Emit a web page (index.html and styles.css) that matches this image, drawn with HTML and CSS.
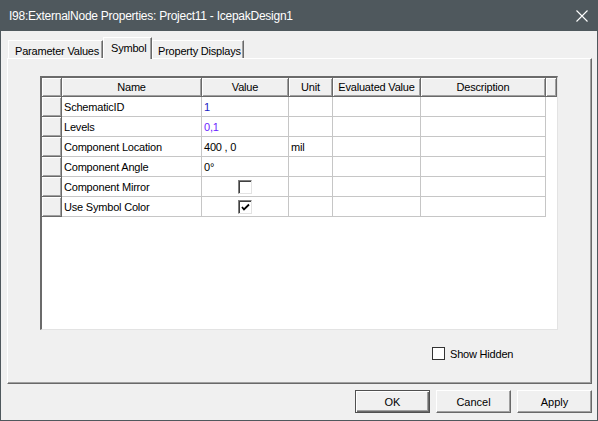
FILE: index.html
```html
<!DOCTYPE html>
<html>
<head>
<meta charset="utf-8">
<link rel="stylesheet" href="styles.css">
</head>
<body>
<div class="window">
  <div class="titlebar">
    <span class="title">I98:ExternalNode Properties: Project11 - IcepakDesign1</span>
    <svg class="close" width="12" height="12" viewBox="0 0 12 12"><path d="M0.5 0.5 L11.5 11.5 M11.5 0.5 L0.5 11.5" stroke="#fff" stroke-width="1.1"/></svg>
  </div>
  <div class="content">
    <div class="tabs">
      <div class="tab t1">Parameter Values</div>
      <div class="tab t2 active">Symbol</div>
      <div class="tab t3">Property Displays</div>
    </div>
    <div class="panel">
      <div class="grid">
        <div class="row hdr">
          <div class="hc"></div>
          <div class="hc">Name</div>
          <div class="hc">Value</div>
          <div class="hc">Unit</div>
          <div class="hc">Evaluated Value</div>
          <div class="hc">Description</div>
          <div class="hc"></div>
        </div>
        <div class="row">
          <div class="rh"></div>
          <div class="c">SchematicID</div>
          <div class="c blue">1</div>
          <div class="c"></div>
          <div class="c"></div>
          <div class="c"></div>
          <div class="e"></div>
        </div>
        <div class="row">
          <div class="rh"></div>
          <div class="c">Levels</div>
          <div class="c violet">0,1</div>
          <div class="c"></div>
          <div class="c"></div>
          <div class="c"></div>
          <div class="e"></div>
        </div>
        <div class="row">
          <div class="rh"></div>
          <div class="c">Component Location</div>
          <div class="c">400 , 0</div>
          <div class="c">mil</div>
          <div class="c"></div>
          <div class="c"></div>
          <div class="e"></div>
        </div>
        <div class="row">
          <div class="rh"></div>
          <div class="c">Component Angle</div>
          <div class="c">0°</div>
          <div class="c"></div>
          <div class="c"></div>
          <div class="c"></div>
          <div class="e"></div>
        </div>
        <div class="row">
          <div class="rh"></div>
          <div class="c">Component Mirror</div>
          <div class="c center"><span class="cb3d"></span></div>
          <div class="c"></div>
          <div class="c"></div>
          <div class="c"></div>
          <div class="e"></div>
        </div>
        <div class="row">
          <div class="rh"></div>
          <div class="c">Use Symbol Color</div>
          <div class="c center"><span class="cb3d"><svg width="11" height="11" viewBox="0 0 11 11"><path d="M2 5 L4 7.5 L9 2.5" fill="none" stroke="#000" stroke-width="1.8"/></svg></span></div>
          <div class="c"></div>
          <div class="c"></div>
          <div class="c"></div>
          <div class="e"></div>
        </div>
      </div>
      <div class="showhidden">
        <span class="cbflat"></span>
        <span class="lbl">Show Hidden</span>
      </div>
    </div>
    <div class="footer">
      <button class="btn default">OK</button>
      <button class="btn">Cancel</button>
      <button class="btn">Apply</button>
    </div>
  </div>
</div>
</body>
</html>
```
FILE: styles.css
```css
html, body {
  margin: 0;
  padding: 0;
  background: #f0f0f0;
}
body {
  font-family: "Liberation Sans", Arial, sans-serif;
  font-size: 11px;
  letter-spacing: -0.2px;
  color: #000;
}
.window {
  width: 598px;
  height: 421px;
  box-sizing: border-box;
  border: 1px solid #4f585d;
  border-top: 0;
  background: #f0f0f0;
  display: flex;
  flex-direction: column;
}
.titlebar {
  height: 31px;
  background: #4f585d;
  display: flex;
  align-items: center;
  justify-content: space-between;
  padding: 0 9px 0 9px;
  flex: none;
  margin: 0 -1px;
}
.title {
  color: #fff;
  font-size: 12px;
  letter-spacing: -0.25px;
}
.close {
  margin-right: 1px;
}
.content {
  padding: 6px 5px 0 6px;
  display: flex;
  flex-direction: column;
  flex: 1;
}
.tabs {
  height: 21px;
  display: flex;
  align-items: flex-end;
  padding-left: 1px;
  position: relative;
  z-index: 2;
}
.tab {
  flex: none;
  white-space: nowrap;
  height: 18px;
  box-sizing: border-box;
  background: #f0f0f0;
  border-top: 1px solid #fff;
  border-left: 1px solid #fff;
  border-right: 1px solid #696969;
  box-shadow: inset -1px 0 #a0a0a0;
  display: flex;
  align-items: center;
  padding-left: 6px;
  padding-top: 2px;
}
.t1 { width: 95px; }
.t2 { width: 49px; }
.t3 { width: 92px; padding-left: 5px; }
.tab.active {
  height: 22px;
  margin-bottom: -1px;
  padding-left: 7px;
  padding-top: 0;
  padding-bottom: 2px;
}
.panel {
  width: 585px;
  height: 326px;
  box-sizing: border-box;
  border-top: 1px solid #fff;
  border-left: 1px solid #fff;
  border-right: 1px solid #696969;
  border-bottom: 1px solid #696969;
  box-shadow: inset -1px -1px #a0a0a0;
  padding: 17px 0 0 32px;
  display: flex;
  flex-direction: column;
}
.grid {
  width: 518px;
  height: 254px;
  box-sizing: border-box;
  background: #fff;
  border-top: 2px solid #6b6b6b;
  border-left: 2px solid #6b6b6b;
  border-right: 1px solid #e3e3e3;
  border-bottom: 1px solid #e3e3e3;
}
.row {
  display: grid;
  grid-template-columns: 20px 140px 87px 44px 88px 125px 11px;
  height: 20px;
}
.row.hdr {
  height: 19px;
}
.hc, .rh {
  background: #f0f0f0;
  box-sizing: border-box;
  border-right: 1px solid #696969;
  border-bottom: 1px solid #696969;
  box-shadow: inset 1px 1px #fff, inset -1px -1px #a0a0a0;
  display: flex;
  align-items: center;
  justify-content: center;
  white-space: nowrap;
}
.c {
  box-sizing: border-box;
  border-right: 1px solid #c6c6c6;
  border-bottom: 1px solid #c6c6c6;
  display: flex;
  align-items: center;
  padding-left: 2px;
  white-space: nowrap;
}
.c.center {
  justify-content: center;
  padding-left: 0;
  padding-right: 1px;
}
.e {
  background: #fff;
}
.blue { color: #1c1cc4; }
.violet { color: #6b1cff; }
.cb3d {
  width: 14px;
  height: 14px;
  box-sizing: border-box;
  background: #fff;
  border-top: 1px solid #808080;
  border-left: 1px solid #808080;
  border-right: 1px solid #e3e3e3;
  border-bottom: 1px solid #e3e3e3;
  box-shadow: inset 1px 1px #404040;
  display: flex;
  align-items: center;
  justify-content: center;
}
.cb3d svg {
  margin: 1px 0 0 1px;
}
.showhidden {
  margin-top: 17px;
  padding-left: 392px;
  display: flex;
  align-items: center;
  gap: 5px;
}
.cbflat {
  width: 13px;
  height: 13px;
  box-sizing: border-box;
  border: 1px solid #333;
  background: #fff;
}
.footer {
  display: flex;
  justify-content: flex-end;
  gap: 6px;
  padding-top: 6px;
}
.btn {
  width: 75px;
  height: 23px;
  box-sizing: border-box;
  background: #f0f0f0;
  font-family: "Liberation Sans", Arial, sans-serif;
  font-size: 11px;
  color: #000;
  border: 1px solid;
  border-color: #fff #696969 #696969 #fff;
  box-shadow: inset -1px -1px #a0a0a0;
  padding: 0;
  margin: 0;
}
.btn.default {
  border: 1px solid #505050;
  box-shadow: inset 1px 1px #fff, inset -1px -1px #696969, inset -2px -2px #a0a0a0;
}
```
